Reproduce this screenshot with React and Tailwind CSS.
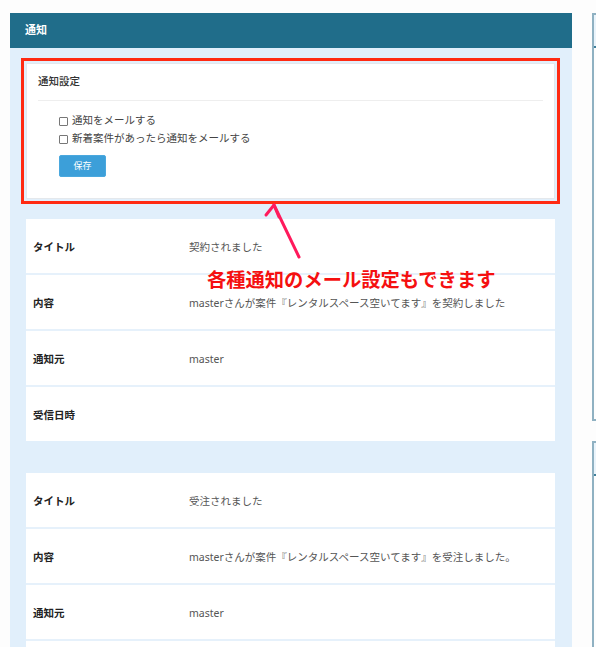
import React from 'react';

const rows1 = [
  { label: 'タイトル', value: '契約されました' },
  { label: '内容', value: 'masterさんが案件『レンタルスペース空いてます』を契約しました' },
  { label: '通知元', value: 'master' },
  { label: '受信日時', value: '' },
];

const rows2 = [
  { label: 'タイトル', value: '受注されました' },
  { label: '内容', value: 'masterさんが案件『レンタルスペース空いてます』を受注しました。' },
  { label: '通知元', value: 'master' },
  { label: '受信日時', value: '' },
];

function DetailCard({ rows }) {
  return (
    <div className="bg-white">
      {rows.map((row, i) => (
        <div
          key={i}
          className={`flex items-center pl-[7px] pt-[3px] ${i < rows.length - 1 ? 'h-[56px] border-b-2 border-[#e6f1fb]' : 'h-[54px]'}`}
        >
          <div className="w-[156px] shrink-0 text-[10.5px] font-bold text-[#222]">{row.label}</div>
          <div className="text-[10.5px] text-[#555]">{row.value}</div>
        </div>
      ))}
    </div>
  );
}

function Checkbox({ label }) {
  return (
    <label className="flex items-center h-[18px] gap-[4px] text-[10.5px] text-[#444]">
      <input
        type="checkbox"
        className="appearance-none w-[9px] h-[9px] border border-[#777] rounded-[1px] bg-white m-0"
      />
      {label}
    </label>
  );
}

export default function App() {
  return (
    <div
      className="relative w-[596px] h-[647px] overflow-hidden bg-[#fdfdfd] flex pt-[13px] pl-[10px]"
      style={{ fontFamily: '"Noto Sans", "Noto Sans CJK JP", sans-serif' }}
    >
      {/* main panel */}
      <div className="w-[562px] shrink-0 flex flex-col">
        <div className="h-[35px] shrink-0 bg-[#206d8a] flex items-center px-[15px]">
          <span className="text-white text-[11px] font-bold">通知</span>
        </div>
        <div className="flex-1 min-h-0 overflow-hidden bg-[#e1effb] pl-[16px] pr-[17px] pt-[15px]">
          {/* settings card */}
          <div className="bg-white border border-[#e4e8ec] outline-[3px] outline-[#ff2a12] outline-offset-[2px] px-[11px] pb-[21px]">
            <div className="pt-[10px] pb-[12px] border-b border-[#eeeeee] text-[10.5px] leading-[14px] font-medium text-[#333]">
              通知設定
            </div>
            <div className="pl-[21px] pt-[11px]">
              <Checkbox label="通知をメールする" />
              <Checkbox label="新着案件があったら通知をメールする" />
              <button className="mt-[7px] w-[47px] h-[22px] bg-[#3c9fd9] rounded-[2px] text-white text-[9px] border border-[#4aa8de]">
                保存
              </button>
            </div>
          </div>

          <div className="mt-[20px]">
            <DetailCard rows={rows1} />
          </div>
          <div className="mt-[32px]">
            <DetailCard rows={rows2} />
          </div>
        </div>
      </div>

      {/* right column */}
      <div className="ml-[20px] w-[300px] shrink-0 flex flex-col">
        <div className="h-[408px] shrink-0 border-2 border-[#8fb1c2] bg-[#fdfdfd]">
          <div className="h-[33px] bg-[#eaf4fb] border-b-2 border-[#3f7f9a]" />
        </div>
        <div className="mt-[20px] h-[400px] shrink-0 border-2 border-[#8fb1c2] bg-[#fdfdfd]">
          <div className="h-[33px] bg-[#eaf4fb] border-b-2 border-[#3f7f9a]" />
        </div>
      </div>

      {/* annotation */}
      <svg className="absolute left-[262px] top-[198px]" width="48" height="70" viewBox="0 0 48 70">
        <line x1="37" y1="59" x2="12" y2="7" stroke="#ff1a5c" strokeWidth="3" strokeLinecap="round" />
        <polyline points="4,17 12,7 17,19" fill="none" stroke="#ff1a5c" strokeWidth="3" strokeLinecap="round" strokeLinejoin="round" />
      </svg>
      <div className="absolute left-[207px] top-[268px] text-[19.3px] leading-[24px] font-bold text-[#f51010]">
        各種通知のメール設定もできます
      </div>
    </div>
  );
}
